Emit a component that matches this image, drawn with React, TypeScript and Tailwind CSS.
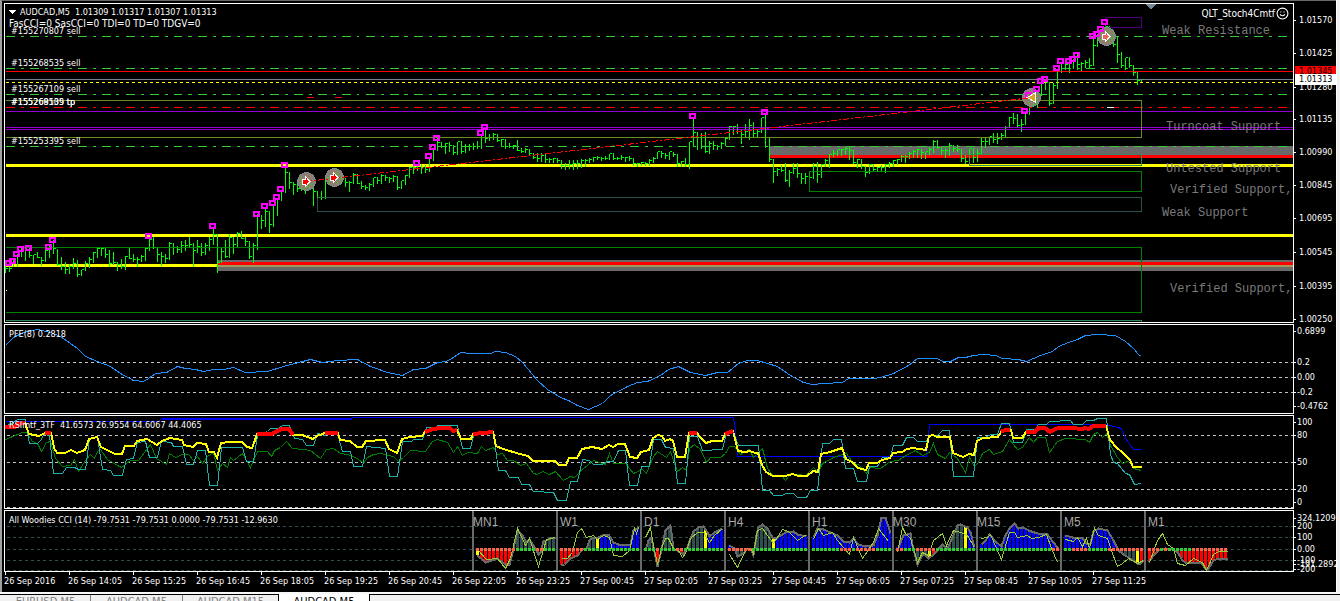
import React from "react";
import { Smile } from "lucide-react";

// high, low, close of every bar, in chart units (one bar each 4 units)
const bars = `
265 272 268,263 271 268,259 266 261,253 266 256,247 256 249,249 260 250,247 257 255,254 263 254,251 257 257,257 265 260,
248 261 250,245 257 247,239 253 248,249 265 264,256 269 266,261 273 269,263 273 266,257 268 263,259 276 274,269 275 269,
260 270 263,256 267 259,251 262 252,246 257 248,247 255 248,247 257 254,249 266 263,251 264 262,261 270 264,258 268 266,
255 269 256,247 258 258,253 261 259,256 266 259,254 261 256,247 260 248,237 250 239,236 248 247,246 261 254,251 265 256,
253 262 258,241 259 243,242 254 247,245 252 249,240 252 245,239 250 245,236 247 244,242 266 250,239 252 246,242 255 252,
242 254 245,236 250 239,226 244 234,233 272 262,247 262 251,239 257 256,233 257 237,236 253 244,231 246 233,230 238 238,
236 245 241,240 258 256,242 262 245,213 249 215,215 228 220,206 226 211,210 232 224,203 226 204,197 215 198,189 200 190,
165 192 172,171 188 182,181 194 184,182 191 188,175 190 188,182 193 186,181 189 184,182 205 191,191 198 197,190 199 197,
177 198 177,175 184 180,172 182 173,168 183 175,175 183 178,177 186 182,180 191 182,172 183 174,173 183 183,180 188 186,
184 189 187,182 190 184,177 186 177,176 183 180,173 183 175,175 180 177,177 182 178,174 181 176,176 189 187,180 188 180,
174 184 175,166 177 167,165 173 167,163 170 165,163 173 167,164 172 169,156 171 158,147 160 148,137 150 142,141 147 146,
142 153 143,141 151 145,144 154 152,141 154 141,141 153 151,143 152 146,143 150 146,142 149 146,140 148 146,134 148 134,
127 142 138,133 140 137,132 139 134,133 141 140,138 145 139,138 148 146,142 147 146,144 148 145,139 150 150,147 152 151,
147 152 149,148 155 153,152 158 157,152 161 158,152 161 155,152 162 159,157 162 159,157 162 158,158 162 160,159 168 165,
162 169 165,159 168 164,159 169 163,159 168 163,158 167 160,158 166 160,157 162 159,156 161 157,155 159 157,156 160 158,
155 159 158,153 159 153,152 159 158,156 159 158,154 159 157,157 161 157,155 160 158,158 165 163,162 166 163,161 165 162,
161 165 163,158 165 160,156 162 158,151 158 151,150 157 153,152 158 155,151 159 151,152 156 154,153 166 163,160 166 161,
157 166 164,141 168 141,116 146 132,132 149 137,132 148 146,131 152 151,140 153 143,140 149 145,144 149 146,141 148 143,
136 145 138,125 139 126,125 134 126,123 133 131,129 143 134,123 137 131,118 139 125,121 137 133,129 137 131,117 132 117,
112 147 146,137 161 159,158 182 171,167 175 169,164 171 170,162 181 180,169 186 172,162 173 168,162 177 173,172 183 178,
172 183 176,171 177 177,162 178 166,161 182 174,163 177 164,158 166 160,153 167 154,149 156 153,149 155 149,148 155 149,
146 154 148,146 159 150,149 163 162,158 167 159,158 168 166,166 176 172,163 173 164,163 170 169,166 171 167,164 171 167,
163 172 164,161 167 163,159 166 160,158 164 159,154 161 156,154 162 156,151 158 153,149 157 151,148 157 149,149 158 152,
151 158 151,146 154 149,139 152 141,139 148 147,147 154 150,147 157 150,142 155 145,144 151 148,144 151 149,148 161 158,
154 163 161,148 160 148,147 162 157,148 161 153,137 154 141,137 147 141,136 144 136,132 142 139,132 143 138,132 139 135,
125 137 127,116 127 117,112 123 118,113 127 125,118 131 124,112 124 113,95 114 97,97 106 104,89 107 90,81 95 82,
79 89 82,82 105 103,82 103 85,68 88 70,61 72 62,61 69 64,61 72 63,58 68 60,53 69 64,61 70 63,
59 67 62,57 68 65,37 65 45,33 46 35,28 40 30,22 37 26,26 42 38,32 46 44,35 62 54,51 67 65,
57 69 57,56 67 65,65 75 72,71 84 80,78 81 79`
  .trim()
  .split(",")
  .map((b) => b.trim().split(" ").map(Number));

const barPath = bars
  .map(([high, low, close], i) => {
    const x = 5 + i * 4;
    const open = i ? bars[i - 1][2] : close;
    return `M${x} ${high}V${low}M${x - 1} ${Math.min(Math.max(open, high), low)}H${x}M${x} ${close}H${x + 2}`;
  })
  .join("");

const markers = [
  [9, 263], [13, 261], [17, 254], [21, 249], [29, 248], [49, 247], [53, 240], [149, 236], [213, 226],
  [257, 214], [265, 206], [273, 203], [277, 197], [281, 189], [285, 165], [417, 163], [429, 156],
  [433, 147], [437, 138], [481, 133], [485, 127], [693, 116], [765, 112], [1025, 111], [1029, 95],
  [1037, 89], [1041, 81], [1045, 79], [1057, 68], [1061, 61], [1069, 61], [1073, 59], [1077, 55],
  [1093, 36], [1097, 34], [1101, 29], [1105, 22],
];

const circles = [
  { x: 306, y: 181, fill: "#ff0000", left: false },
  { x: 334, y: 177, fill: "#ff0000", left: false },
  { x: 1031, y: 97, fill: "#daa520", left: true },
  { x: 1106, y: 36, fill: "#f06060", left: false },
];

const orders = [
  { text: "#155270807 sell", y: 31 },
  { text: "#155268535 sell", y: 63 },
  { text: "#155267109 sell", y: 89 },
  { text: "#155268535 tp", y: 102 },
  { text: "#155269109 tp", y: 102 },
  { text: "#155253395 sell", y: 141 },
];

const zones = [
  { text: "Weak Resistance", x: 1163, y: 30 },
  { text: "Turncoat Support", x: 1167, y: 126 },
  { text: "Untested Support", x: 1167, y: 168 },
  { text: "Verified Support,", x: 1171, y: 189 },
  { text: "Weak Support", x: 1163, y: 212 },
  { text: "Verified Support,", x: 1171, y: 288 },
];

const pfe =
  "5,345 13,337 23,332 37,329 50,332 60,336 70,343 77,348 85,356 97,361 110,366 120,373 133,380 143,381 148,378 155,373 166,372 177,366 185,368 195,369 203,371 213,369 223,369 233,367 245,372 267,371 283,366 298,362 310,359 322,362 337,360 357,359 370,366 387,372 402,375 413,369 425,368 437,362 446,361 453,357 460,352 470,353 490,353 495,351 505,352 515,356 522,362 537,380 547,389 560,397 568,400 577,405 588,409 602,403 610,395 627,386 637,382 647,381 660,375 668,369 678,366 690,372 705,375 717,372 727,372 738,363 747,360 757,360 767,363 777,366 790,375 803,382 812,384 823,383 842,382 848,378 873,378 880,377 893,373 908,365 917,358 937,358 942,361 950,361 958,357 965,357 973,355 983,354 995,355 1002,358 1018,359 1026,361 1040,355 1052,351 1058,346 1068,342 1077,339 1085,335 1097,334 1115,335 1125,341 1133,348 1138,354 1141,356";

const rsiMain =
  "5,427 15,427 17,424 25,423 26,426 29,434 39,436 45,433 51,433 52,437 54,448 57,453 65,453 71,450 77,453 85,450 89,439 97,437 101,447 115,454 122,454 125,446 134,446 137,441 147,439 157,445 162,441 170,438 182,440 184,445 193,447 197,443 206,444 209,452 214,452 217,458 221,443 230,442 242,442 247,447 252,448 254,443 257,434 271,434 282,429 289,429 293,435 302,435 313,439 317,436 325,433 338,433 340,440 350,441 357,447 362,447 366,441 385,440 389,449 397,453 402,439 410,437 422,436 425,432 433,429 440,428 450,428 453,431 457,430 461,439 471,439 473,434 493,432 496,446 503,449 520,454 528,456 533,461 555,461 559,465 566,465 569,458 577,458 582,449 592,447 602,449 609,445 613,447 618,444 625,444 630,457 637,458 641,452 649,450 653,438 658,435 662,436 665,441 670,439 673,441 677,457 685,457 689,433 697,433 700,437 706,443 712,441 722,441 725,434 733,431 738,451 745,452 750,451 755,453 758,453 762,465 766,472 773,476 785,476 793,474 798,476 807,476 813,471 818,472 821,454 830,452 842,448 846,459 852,462 858,468 866,470 869,463 877,463 882,460 890,458 893,453 902,452 907,449 913,448 926,450 929,436 933,435 937,437 950,437 953,453 963,457 969,454 974,455 977,441 983,438 998,437 1001,432 1011,430 1013,438 1022,438 1026,432 1035,432 1038,428 1045,428 1050,432 1058,428 1072,428 1082,429 1085,428 1089,429 1093,426 1106,426 1110,440 1117,448 1122,452 1130,460 1133,467 1142,467";

const rsiHot = [
  "5,427 15,427 17,424 25,423",
  "45,433 51,433",
  "257,434 271,434 282,429 289,429 293,435",
  "325,433 338,433",
  "425,432 433,429 440,428 450,428 453,431 457,430",
  "473,434 493,432",
  "689,433 697,433",
  "725,434 733,431",
  "1001,432 1005,430 1010,430",
  "1026,432 1035,432 1038,428 1045,428 1050,432 1058,428 1072,428 1082,429 1085,428 1089,429 1093,426 1106,426",
];

const rsiFast =
  "5,426 13,422 17,419 25,419 29,443 37,443 41,439 43,434 49,435 53,473 62,473 66,467 74,467 78,469 85,469 89,438 97,437 102,469 110,470 113,475 122,475 126,459 133,458 137,442 145,441 149,457 157,457 161,441 171,442 173,446 182,446 186,464 193,464 197,450 205,450 209,485 217,485 221,447 242,447 246,461 253,461 257,435 267,431 270,428 278,428 282,425 289,425 294,438 302,439 306,445 313,445 317,433 325,435 328,433 337,433 342,451 350,451 353,466 362,466 366,446 385,448 389,476 397,476 402,441 411,441 413,439 422,439 426,427 435,427 437,425 457,425 462,448 470,448 473,435 493,433 498,470 505,470 509,477 518,477 521,484 529,484 533,491 553,492 557,500 566,500 570,481 577,481 582,459 589,460 593,464 602,464 606,461 613,461 618,450 625,450 629,485 637,485 641,466 649,466 653,439 661,439 665,447 673,448 677,483 685,483 689,436 697,436 702,450 722,449 726,433 733,432 738,445 758,445 762,490 769,490 773,495 782,495 785,493 793,493 797,497 806,497 810,490 817,490 822,443 829,443 833,439 841,439 845,468 853,468 857,481 866,481 869,466 877,466 882,457 890,457 893,445 902,445 906,437 913,437 917,441 926,441 929,435 937,435 942,430 949,430 953,476 973,476 977,437 985,437 990,434 997,434 1001,423 1009,423 1013,442 1022,442 1026,429 1035,429 1038,424 1046,424 1049,421 1070,420 1073,424 1082,424 1086,420 1093,420 1097,418 1106,418 1110,454 1113,462 1117,463 1125,473 1129,474 1134,484 1141,483";

const rsiSlow =
  "5,439 22,432 26,432 32,441 37,443 41,451 46,442 50,441 55,458 62,466 70,465 74,459 78,471 83,463 85,460 90,454 94,458 97,451 100,449 107,459 117,465 121,467 130,460 138,460 147,448 150,444 156,458 166,464 169,453 175,457 182,454 188,454 193,460 197,456 202,463 207,456 213,452 217,470 222,463 227,467 230,457 233,460 242,453 250,467 257,451 267,451 271,456 274,450 280,447 286,441 292,448 303,449 310,450 320,458 326,449 333,448 340,453 347,454 357,458 363,463 367,457 373,454 380,453 393,456 398,461 403,457 410,450 425,451 432,441 437,439 447,442 453,452 457,446 462,455 467,452 477,453 481,446 485,450 493,447 497,454 502,453 507,460 513,460 520,465 526,463 533,473 537,474 542,471 549,474 555,471 563,480 570,476 574,477 582,469 593,460 605,464 609,453 613,463 625,463 633,473 642,469 646,473 653,456 657,451 666,457 670,451 677,471 682,467 686,470 689,448 694,444 700,449 706,462 710,457 720,457 725,453 729,446 734,446 740,454 749,449 753,457 762,448 767,468 773,476 782,476 785,480 790,473 805,475 813,467 818,472 822,463 833,457 842,454 846,453 853,463 858,464 866,473 869,467 880,468 890,461 898,460 902,457 915,450 922,455 929,452 933,443 937,454 945,458 949,452 957,458 965,472 969,457 974,466 978,462 982,453 989,449 993,454 1002,451 1009,439 1017,449 1022,447 1029,437 1033,442 1037,437 1045,437 1049,452 1057,441 1065,438 1085,439 1089,442 1093,434 1097,432 1102,437 1106,433 1110,445 1117,457 1122,463 1130,460 1133,468 1141,470";

const rsiHigh =
  "5,421 158,421 161,418 351,418 352,417 733,417 735,430 737,456 926,456 929,424 1106,424 1117,427 1121,428 1125,438 1133,449 1141,449";

const RED = "#ff0000";
const BLUE = "#0000ff";
const SLATE = "#2f4f4f";
const YELLOW = "#ffff00";

type Frame = {
  name: string;
  x: number;
  env: string;
  fast: string;
  fills: [number, string][]; // bars up to that x take the colour
  down: [number, number][]; // where the zero line is in its down colour
};

const frames: Frame[] = [
  {
    name: "MN1", x: 473,
    env: "477,555 485,562 497,558 505,564 509,564 513,548 517,530 522,535 526,542 529,539 533,545 538,554 540,552 543,541 550,538 555,537",
    fast: "477,549 486,559 497,558 505,568 510,558 517,528 525,545 529,538 538,566 546,539 555,537",
    fills: [[478, YELLOW], [514, RED], [534, SLATE], [541, RED], [556, SLATE]],
    down: [[473, 513], [537, 541]],
  },
  {
    name: "W1", x: 557,
    env: "561,565 564,564 570,558 577,555 582,549 586,548 589,540 593,537 598,537 603,534 608,534 613,542 618,544 630,544 633,530 638,527",
    fast: "561,558 567,558 572,552 577,532 581,528 586,537 593,535 597,539 603,535 609,537 613,555 622,556 629,550 634,528 636,533 638,527",
    fills: [[578, RED], [594, SLATE], [598, YELLOW], [640, BLUE]],
    down: [[557, 581]],
  },
  {
    name: "D1", x: 641,
    env: "645,550 648,540 651,537 653,547 657,566 662,545 665,530 670,525 673,548 678,551 683,554 687,547 690,538 693,531 698,527 703,526 707,532 709,536 714,532 722,528",
    fast: "645,537 650,527 653,545 657,564 662,545 665,538 668,538 673,548 678,550 682,557 685,553 690,538 697,532 703,532 709,542 714,535 722,528",
    fills: [[654, SLATE], [658, RED], [676, SLATE], [684, RED], [702, SLATE], [706, YELLOW], [724, BLUE]],
    down: [[657, 658], [677, 681]],
  },
  {
    name: "H4", x: 725,
    env: "729,545 734,548 737,556 743,553 747,548 750,548 753,555 756,535 758,527 762,524 767,528 772,537 777,537 785,532 793,531 797,534 806,536",
    fast: "729,554 737,567 746,548 750,548 753,553 757,530 762,528 767,535 773,543 782,529 788,531 797,540 806,534",
    fills: [[734, BLUE], [748, SLATE], [754, RED], [770, SLATE], [774, YELLOW], [808, BLUE]],
    down: [[729, 750]],
  },
  {
    name: "H1", x: 809,
    env: "813,537 817,528 823,529 830,532 837,535 843,541 849,542 853,538 858,544 865,546 873,545 877,535 881,517 885,517 890,533",
    fast: "813,539 818,528 823,535 832,532 837,540 849,554 853,537 862,558 873,542 878,528 888,541",
    fills: [[892, BLUE]],
    down: [[841, 849], [857, 873]],
  },
  {
    name: "M30", x: 893,
    env: "898,547 903,535 910,533 912,545 917,564 923,553 928,558 933,554 942,544 947,548 952,537 957,525 960,524 967,527 970,532 974,547",
    fast: "897,552 902,527 905,533 910,538 917,562 922,552 928,555 933,540 942,533 946,545 953,530 960,532 967,535 974,547",
    fills: [[914, BLUE], [926, SLATE], [930, YELLOW], [934, RED], [962, SLATE], [966, YELLOW], [976, BLUE]],
    down: [[897, 902], [917, 933]],
  },
  {
    name: "M15", x: 977,
    env: "981,544 985,540 989,534 995,541 1001,546 1005,535 1009,528 1014,523 1018,528 1023,527 1028,530 1037,533 1047,534 1052,541 1058,548",
    fast: "981,538 987,537 990,534 996,548 1001,559 1009,532 1014,532 1017,537 1027,535 1031,538 1038,537 1046,534 1051,548 1057,562",
    fills: [[1060, BLUE]],
    down: [[1053, 1058]],
  },
  {
    name: "M5", x: 1061,
    env: "1065,535 1072,537 1082,538 1086,543 1090,543 1093,531 1098,528 1107,530 1113,540 1118,550 1123,554 1128,557 1137,563 1140,563 1143,560",
    fast: "1065,539 1073,541 1077,537 1082,546 1086,538 1089,548 1094,528 1098,535 1107,538 1112,553 1117,566 1122,563 1128,558 1137,563 1143,560",
    fills: [[1116, BLUE], [1134, SLATE], [1138, YELLOW], [1144, RED]],
    down: [[1073, 1086], [1109, 1143]],
  },
  {
    name: "M1", x: 1145,
    env: "1148,562 1153,555 1158,550 1165,548 1173,549 1178,553 1182,560 1185,562 1193,562 1200,562 1205,568 1208,568 1213,560 1218,558 1227,558",
    fast: "1149,562 1157,540 1162,533 1167,544 1173,548 1177,563 1185,565 1193,558 1202,562 1206,570 1213,554 1218,551 1227,551",
    fills: [[1227, RED]],
    down: [[1149, 1158], [1165, 1166], [1193, 1227]],
  },
];

// height of a "x,y x,y" line at a given x
const valueAt = (line: string, x: number) => {
  const pts = line.split(" ").map((p) => p.split(",").map(Number));
  for (let i = 1; i < pts.length; i++) {
    const [x0, y0] = pts[i - 1];
    const [x1, y1] = pts[i];
    if (x <= x1) return Math.round(y0 + ((Math.max(x, x0) - x0) / (x1 - x0)) * (y1 - y0));
  }
  return pts[pts.length - 1][1];
};

const TimeFrame = ({ frame }: { frame: Frame }) => {
  const end = frame.fills[frame.fills.length - 1][0];
  const xs: number[] = [];
  for (let x = frame.x + 4; x <= end; x += 4) xs.push(x);
  return (
    <g>
      {xs.map((x) => {
        const y = valueAt(frame.env, x);
        const fill = frame.fills.find(([to]) => x <= to)![1];
        return <rect key={x} x={x - 1} y={Math.min(y, 549)} width={3} height={Math.abs(y - 549)} fill={fill} />;
      })}
      <g transform="translate(.5 .5)" fill="none">
        <polyline points={frame.env} stroke="#696969" strokeWidth={2} />
        <polyline points={frame.fast} stroke="#9acd32" />
      </g>
      {xs.map((x) => {
        const down = frame.down.some(([a, b]) => x >= a && x <= b);
        return <rect key={x} x={x - 1} y={548} width={3} height={3} fill={down ? "#ff6347" : "#32cd32"} />;
      })}
      <rect x={frame.x - 1} y={511} width={2} height={60} fill="#696969" />
    </g>
  );
};

const dates = [
  "26 Sep 2016", "26 Sep 14:05", "26 Sep 15:25", "26 Sep 16:45", "26 Sep 18:05", "26 Sep 19:25",
  "26 Sep 20:45", "26 Sep 22:05", "26 Sep 23:25", "27 Sep 00:45", "27 Sep 02:05", "27 Sep 03:25",
  "27 Sep 04:45", "27 Sep 06:05", "27 Sep 07:25", "27 Sep 08:45", "27 Sep 10:05", "27 Sep 11:25",
];

type PanelProps = {
  top: number;
  height: number;
  size: string;
  axis: [string, number][];
  axisX?: string;
  axisExtra?: React.ReactNode;
  overlay?: React.ReactNode;
  children: React.ReactNode;
};

const Panel = ({ top, height, size, axis, axisX = "left-[3px]", axisExtra, overlay, children }: PanelProps) => (
  <section className={`flex ${size}`}>
    <div className="relative min-w-0 flex-1 overflow-hidden border border-white">
      <svg
        className="block h-full w-full"
        viewBox={`5 ${top + 1} 1288 ${height - 2}`}
        preserveAspectRatio="none"
        shapeRendering="crispEdges"
      >
        {children}
      </svg>
      {overlay}
    </div>
    <div className="relative w-[42px] shrink-0">
      {axis.map(([text, y]) => (
        <React.Fragment key={text}>
          <span className="absolute left-0 h-px w-[2px] bg-white" style={{ top: y - top }} />
          <span className={`absolute ${axisX} leading-3 whitespace-nowrap`} style={{ top: y - top - 6 }}>
            {text}
          </span>
        </React.Fragment>
      ))}
      {axisExtra}
    </div>
  </section>
);

const Levels = ({ ys, color }: { ys: number[]; color: string }) => (
  <g stroke={color} strokeDasharray="3 3">
    {ys.map((y) => (
      <line key={y} x1={6} x2={1293} y1={y} y2={y} />
    ))}
  </g>
);

const PriceChart = () => (
  <Panel
    top={3}
    height={320}
    size="h-80"
    axisX="left-[5px]"
    axis={[
      ["1.01570", 20], ["1.01425", 53], ["1.01280", 87], ["1.01135", 119], ["1.00990", 152],
      ["1.00845", 185], ["1.00695", 218], ["1.00545", 252], ["1.00395", 286], ["1.00250", 319],
    ]}
    axisExtra={
      <>
        <span className="absolute top-[63px] right-0 left-px h-[11px] bg-[#ff0000] pl-1 leading-[11px] text-black">
          1.01345
        </span>
        <span className="absolute top-[71px] right-0 left-px h-[11px] bg-white pl-1 leading-[11px] text-black">
          1.01313
        </span>
      </>
    }
    overlay={
      <>
        <div className="absolute top-[2px] left-1 flex items-center gap-1 leading-3 whitespace-pre">
          <svg className="h-1 w-[7px]" viewBox="0 0 7 4" fill="#fff" shapeRendering="crispEdges">
            <path d="M0 0H7L4 4H3Z" />
          </svg>
          <h1>{"AUDCAD,M5  1.01309 1.01317 1.01307 1.01313"}</h1>
        </div>
        <p className="absolute top-[14px] left-1 text-[10px] leading-3 whitespace-nowrap">
          FasCCI=0 SasCCI=0 TDI=0 TD=0 TDGV=0
        </p>
        {orders.map((o) => (
          <span key={o.text} className="absolute left-[6px] leading-3 whitespace-nowrap" style={{ top: o.y - 10 }}>
            {o.text}
          </span>
        ))}
        {zones.map((z) => (
          <span
            key={z.y}
            className="absolute font-['Liberation_Mono',monospace] text-xs leading-3 whitespace-nowrap text-[#7a7a7a]"
            style={{ left: z.x - 6, top: z.y - 9 }}
          >
            {z.text}
          </span>
        ))}
        <div className="absolute top-[3px] right-1 flex items-center gap-px text-[10px] leading-3">
          QLT_Stoch4Cmtf
          <Smile size={13} strokeWidth={2} />
        </div>
      </>
    }
  >
    {/* supply and demand bands */}
    <rect x={769} y={146} width={524} height={9} fill="#696969" />
    <rect x={217} y={260} width={1076} height={11} fill="#696969" />
    <g transform="translate(.5 .5)" fill="none">
      <g stroke={YELLOW} strokeWidth={3}>
        <path d="M5 165H1293M5 235H1293M5 265H217" />
      </g>
      <path d="M217 265.5H1293" stroke="#a09a5a" strokeWidth={2} />
      <path d="M768 156H1293M217 263H1293" stroke={RED} strokeWidth={3} />
      <path d={barPath} stroke="#00ff00" />
      <path d="M5 71H1293" stroke={RED} />
      <path d="M5 79H1293" stroke="#708090" />
      <path d="M5 82H1293" stroke={YELLOW} strokeDasharray="3 3" />
      <path d="M5 111H1293M5 127H1293M5 129H1293" stroke="#9400d3" />
      <path d="M5 36H1293M5 68H1293M5 94H1293M5 146H1293" stroke="#32cd32" strokeDasharray="9 6 3 6" />
      <path d="M5 107H1293" stroke={RED} strokeDasharray="9 6 3 6" />
      <path d="M306 97H313M334 97H341" stroke={RED} />
      <path d="M1106 107H1113" stroke="#fff" />
      <path d="M5 100H1141V137H5" stroke="#6b8e23" />
      <path d="M5 247H1141V312H5M809 171H1141V191H809Z" stroke="#008000" />
      <path d="M5 320H1141V322M969 154H1141V165H969Z" stroke="#2e8b57" />
      <path d="M317 197H1141V211H317Z" stroke={SLATE} />
      <path d="M1105 17H1141V27H1105Z" stroke="#4b0082" />
      <path d="M5 290H6" stroke={YELLOW} />
    </g>
    {circles.map((c) => (
      <circle key={c.x} cx={c.x + 0.5} cy={c.y + 0.5} r={9} fill="#8f7d70" stroke="#778899" />
    ))}
    <g transform="translate(.5 .5)" fill="none">
      <path d={barPath} stroke="#00ff00" strokeOpacity={0.35} />
      <path d="M306 181L1032 97" stroke={RED} strokeDasharray="6 2 2 2" />
    </g>
    <g fill="none" stroke="#ff00ff" strokeWidth={2}>
      {markers.map(([x, y]) => (
        <rect key={x} x={x - 3} y={y - 2} width={5} height={4} />
      ))}
    </g>
    {circles.map((c) => (
      <path
        key={c.x}
        d={c.left ? "M4 -4V5L-4 .5Z" : "M-4 -2H-1V-5L4 .5L-1 6V3H-4Z"}
        transform={`translate(${c.x} ${c.y})`}
        fill={c.fill}
        stroke="#fff"
      />
    ))}
    <path d="M1145 4H1156L1151 9H1150Z" fill="#778899" />
  </Panel>
);

const App = () => {
  return (
    <div className="flex h-screen flex-col overflow-hidden bg-[#f0f0f0] font-['DejaVu_Sans_Condensed','Noto_Sans',sans-serif] text-[9px] text-white">
      <div className="flex shrink-0">
        <main className="flex min-w-0 flex-1 flex-col gap-px border-t border-l-2 border-t-[#696969] border-l-[#a0a0a0] bg-black pt-[2px] pl-[2px]">
          <PriceChart />

          <Panel
            top={324}
            height={90}
            size="h-[90px]"
            axis={[["0.6899", 331], ["0.2", 362], ["0.00", 377], ["-0.2", 392], ["-0.4762", 406]]}
            overlay={<h2 className="absolute top-[3px] left-1 leading-3">PFE(8) 0.2818</h2>}
          >
            <g transform="translate(.5 .5)" fill="none">
              <Levels ys={[362, 377, 392]} color="#c0c0c0" />
              <polyline points={pfe} stroke="#1e90ff" />
            </g>
          </Panel>

          <Panel
            top={415}
            height={94}
            size="h-[94px]"
            axis={[["100", 422], ["80", 435], ["50", 462], ["20", 489], ["0", 502]]}
            overlay={
              <h2 className="absolute top-[3px] left-1 leading-3 whitespace-pre">
                {"RSImtf_3TF  41.6573 26.9554 64.6067 44.4065"}
              </h2>
            }
          >
            <g transform="translate(.5 .5)" fill="none">
              <Levels ys={[435, 462, 489, 507]} color="#c0c0c0" />
              <polyline points={rsiHigh} stroke={BLUE} />
              <path d="M161 418.5H351" stroke={BLUE} strokeWidth={2} />
              <polyline points={rsiSlow} stroke="#008000" />
              <polyline points={rsiFast} stroke="#20b2aa" />
            </g>
            <g fill="none">
              <polyline points={rsiMain} stroke={YELLOW} strokeWidth={2} />
              {rsiHot.map((points) => (
                <polyline key={points} points={points} stroke={RED} strokeWidth={4} />
              ))}
            </g>
          </Panel>

          <Panel
            top={510}
            height={62}
            size="h-[62px]"
            axis={[
              ["324.1209", 518], ["200", 526], ["100", 537], ["0.00", 549], ["-100", 560],
              ["-191.2892", 564], ["-200", 569],
            ]}
            overlay={
              <>
                <h2 className="absolute top-[3px] left-1 leading-3">
                  All Woodies CCI (14) -79.7531 -79.7531 0.0000 -79.7531 -12.9630
                </h2>
                {frames.map((f) => (
                  <span
                    key={f.name}
                    className="absolute top-[5px] font-['Liberation_Sans',sans-serif] text-xs leading-3 text-[#a9a9a9]"
                    style={{ left: f.name.length > 2 ? f.x - 5 : f.x - 2 }}
                  >
                    {f.name}
                  </span>
                ))}
              </>
            }
          >
            <g transform="translate(.5 .5)">
              <Levels ys={[526, 537, 549, 560, 570]} color={SLATE} />
            </g>
            {frames.map((f) => (
              <TimeFrame key={f.name} frame={f} />
            ))}
          </Panel>

          <ol className="-mt-px flex h-5 overflow-hidden pl-px">
            {dates.map((date) => (
              <li key={date} className="w-16 shrink-0 whitespace-nowrap">
                <span className="block h-[3px] w-px bg-white" />
                <span className="-ml-px block leading-3">{date}</span>
              </li>
            ))}
          </ol>
        </main>
        <div className="w-1 shrink-0 border-l border-white bg-[#f0f0f0]" />
      </div>

      {/* chart tabs */}
      <div className="h-[2px] shrink-0 bg-[#f8f8f8]" />
      <nav className="flex h-5 shrink-0 text-[11px] leading-3 text-[#808080]">
        <div className="flex border-t border-black pl-px">
          <button className="flex w-[90px] items-start justify-center border-r border-[#808080] pt-px">EURUSD,M5</button>
          <button className="flex w-[92px] items-start justify-center border-r border-[#808080] pt-px">AUDCAD,M5</button>
          <button className="flex w-[95px] items-start justify-center pt-px">AUDCAD,M15</button>
        </div>
        <button className="flex w-[92px] items-start justify-center border-x border-black bg-white pt-[2px] text-black">
          AUDCAD,M5
        </button>
        <div className="flex-1 border-t border-black" />
      </nav>
    </div>
  );
};

export default App;
